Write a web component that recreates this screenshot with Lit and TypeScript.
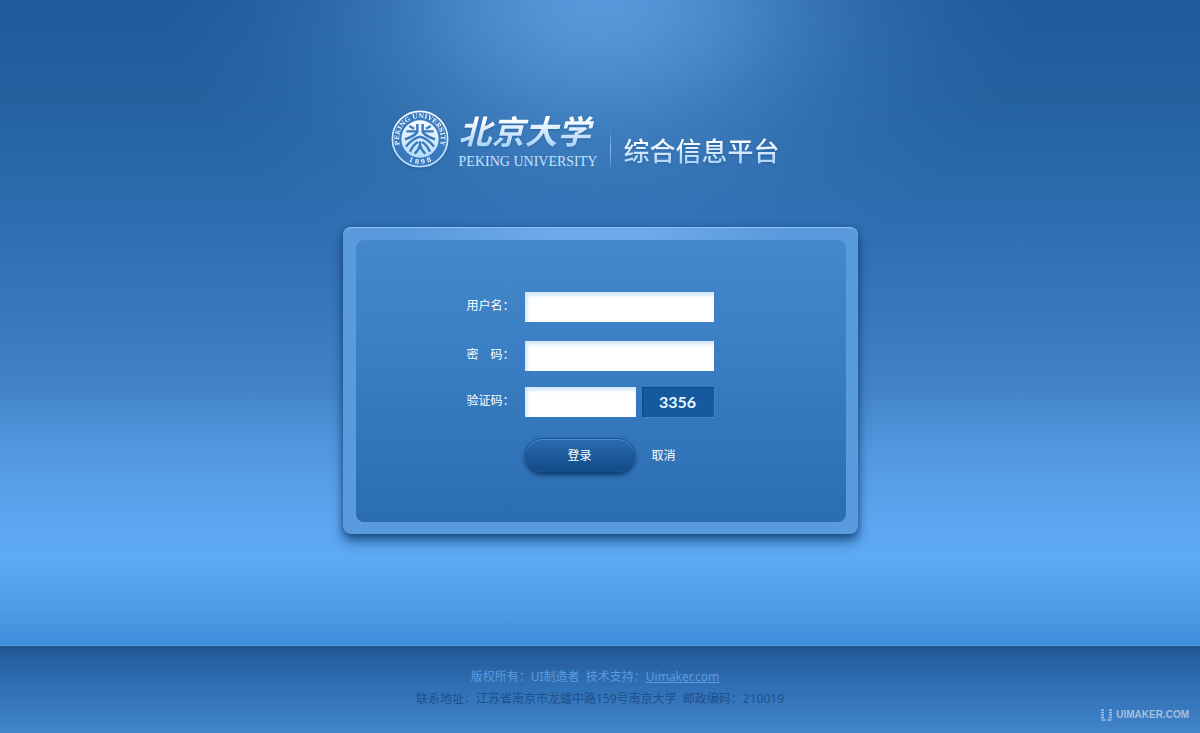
import { LitElement, html, css } from "lit";
import { customElement } from "lit/decorators.js";

@customElement("school-seal")
class SchoolSeal extends LitElement {
  static styles = css`
    :host {
      display: block;
    }
    .seal {
      display: block;
      width: 58px;
      height: 58px;
      filter: drop-shadow(0 1px 1px rgba(20, 70, 130, 0.5));
    }
    .ring-text {
      font: bold 19px "DejaVu Serif", serif;
      fill: #e6f5ff;
    }
  `;

  render() {
    return html`
      <svg class="seal" viewBox="0 0 174 174" role="img" aria-label="Peking University 1898">
        <defs>
          <linearGradient id="face" x1="0" y1="0" x2="0" y2="1">
            <stop offset="0" stop-color="#f6fcff" />
            <stop offset="1" stop-color="#b4dafb" />
          </linearGradient>
          <path id="upper" d="M32.440 118.500 A63 63 0 1 1 141.560 118.500" />
          <path id="lower" d="M38 143.300 A74.500 74.500 0 0 0 136 143.300" />
        </defs>
        <circle cx="87" cy="87" r="83" fill="#3a79be" stroke="url(#face)" stroke-width="5" />
        <circle cx="87" cy="87" r="56" fill="url(#face)" />
        <text class="ring-text">
          <textPath href="#upper" startOffset="50%" text-anchor="middle">PEKING UNIVERSITY</textPath>
        </text>
        <text class="ring-text">
          <textPath href="#lower" startOffset="50%" text-anchor="middle">1 8 9 8</textPath>
        </text>
        <g fill="none" stroke="#3678bb" stroke-width="7">
          <path d="M79 42 V66 Q71 78 42 88" />
          <path d="M95 42 V66 Q103 78 132 88" />
          <path d="M46 64 H79 M95 64 H128" />
          <path d="M55 48 L69 56 M119 48 L105 56" />
          <path d="M87 80 Q62 87 45 110" />
          <path d="M87 80 Q112 87 129 110" />
          <path d="M81 96 Q66 105 57 125" />
          <path d="M93 96 Q108 105 117 125" />
          <path d="M87 94 V108" />
          <path d="M87 105 Q83 121 71 131" />
          <path d="M87 105 Q91 121 103 131" />
        </g>
      </svg>
    `;
  }
}

@customElement("login-panel")
class LoginPanel extends LitElement {
  static styles = css`
    :host {
      display: block;
      width: 100%;
      max-width: 515px;
      font: 12px/26px "Noto Sans CJK SC", sans-serif;
      color: #fff;
    }
    .frame {
      padding: 12px 12px 12px 13px;
      border-radius: 8px;
      background: linear-gradient(90deg, #5a9bdd 0%, #5a9bdd 14%, #6eaae9 42%, #6eaae9 58%, #5a9bdd 84%) top / 100% 13px no-repeat, #5a9bdd;
      border-top: 1px solid #8dc0f4;
      box-shadow: 0 7px 12px rgba(14, 58, 112, 0.75), 0 1px 5px rgba(14, 58, 112, 0.5);
    }
    .form {
      display: flex;
      flex-direction: column;
      gap: 16px;
      min-height: 282px;
      box-sizing: border-box;
      padding: 52px 24px 48px 111px;
      border-radius: 8px;
      background: linear-gradient(#4588cc, #3a7ec3 40%, #2b6db1);
    }
    .credentials {
      display: flex;
      flex-direction: column;
      gap: 19px;
    }
    .row {
      display: flex;
    }
    .label {
      flex: 0 0 58px;
    }
    .field {
      box-sizing: border-box;
      width: 189px;
      height: 30px;
      margin: 0;
      padding: 0 8px;
      border: 0;
      border-radius: 0;
      background: #fff;
      box-shadow: inset 2px 3px 4px #cbe3fa;
      font: 12px "Noto Sans CJK SC", sans-serif;
      color: #1f4f82;
      outline: none;
    }
    .field:focus {
      box-shadow: inset 2px 3px 4px #8fc0f0;
    }
    .short {
      width: 111px;
      margin-right: 6px;
    }
    .code {
      width: 72px;
      height: 30px;
      text-align: center;
      font: bold 16px/30px Lato, sans-serif;
      color: #e4f7ff;
      background: #155a9f;
      box-shadow: inset 1px 1px 1px #0f4a88, 1px 1px 0 #4485c9;
    }
    .actions {
      display: flex;
      align-items: center;
      gap: 17px;
      padding: 5px 0 0 58px;
    }
    .submit {
      width: 110px;
      height: 34px;
      padding: 0;
      border: 1px solid #16528f;
      border-radius: 17px;
      background: linear-gradient(#2b6cb0, #124b87);
      box-shadow: inset 0 1px 0 #4c8cd0, 0 3px 4px rgba(8, 45, 92, 0.8);
      font: inherit;
      color: #fff;
      cursor: pointer;
    }
    .cancel {
      padding: 0;
      border: 0;
      background: none;
      font: inherit;
      color: #fff;
      cursor: pointer;
    }
  `;

  render() {
    return html`
      <div class="frame">
        <form class="form" @submit=${(e: Event) => e.preventDefault()}>
          <div class="credentials">
            <div class="row">
              <label class="label" for="user">用户名：</label>
              <input class="field" id="user" type="text" autocomplete="username" />
            </div>
            <div class="row">
              <label class="label" for="pass">密　码：</label>
              <input class="field" id="pass" type="password" autocomplete="current-password" />
            </div>
          </div>
          <div class="row">
            <label class="label" for="check">验证码：</label>
            <input class="field short" id="check" type="text" autocomplete="off" />
            <output class="code" for="check">3356</output>
          </div>
          <div class="actions">
            <button class="submit" type="submit">登录</button>
            <button class="cancel" type="reset">取消</button>
          </div>
        </form>
      </div>
    `;
  }
}

@customElement("app-root")
class AppRoot extends LitElement {
  static styles = css`
    :host {
      display: flex;
      flex-direction: column;
      min-height: 100vh;
      font-family: "Noto Sans CJK SC", sans-serif;
    }
    .main {
      flex: 1;
      display: flex;
      flex-direction: column;
      align-items: center;
      gap: 56px;
      padding: 106px 16px 60px;
      background:
        radial-gradient(ellipse 430px 290px at 50% 0, rgba(96, 160, 226, 0.9) 0%, rgba(96, 160, 226, 0.8) 15%, rgba(96, 160, 226, 0.6) 32%, rgba(96, 160, 226, 0.38) 48%, rgba(96, 160, 226, 0.2) 64%, rgba(96, 160, 226, 0.07) 82%, rgba(96, 160, 226, 0) 100%),
        linear-gradient(#1e5b9b 0%, #23619f 15%, #2d6cae 32%, #3777bb 48%, #4283c8 60%, #5298df 70%, #5ca6ef 80%, #5eaaf4 87%, #4f9ce7 94%, #3f8edb 100%);
    }
    .brand {
      display: flex;
      align-items: flex-start;
      padding-right: 30px;
    }
    .seal {
      margin-top: 4px;
    }
    .name {
      margin-left: 10px;
    }
    .school {
      margin: 0;
      font: italic 700 33px/48px "Noto Sans CJK SC", sans-serif;
    }
    .latin {
      margin: 0;
      font: 14px/15px "Liberation Serif", serif;
      color: #c2e2fd;
    }
    .divider {
      width: 1px;
      height: 42px;
      margin: 23px 12px 0 13px;
      background: linear-gradient(rgba(150, 200, 250, 0), #8fc2f4 50%, rgba(150, 200, 250, 0));
    }
    .title {
      margin: 25px 0 0;
      font: 500 26px/38px "Noto Sans CJK SC", sans-serif;
    }
    .shine {
      color: transparent;
      background: linear-gradient(#fff 25%, #a9d3fa 85%);
      -webkit-background-clip: text;
      background-clip: text;
      filter: drop-shadow(0 1px 1px rgba(20, 70, 130, 0.4));
    }
    .footer {
      position: relative;
      box-sizing: border-box;
      padding: 20px 16px 23px;
      border-top: 1px solid #4a9be0;
      text-align: center;
      font: 12px/22px "Noto Sans", "Noto Sans CJK SC", sans-serif;
      background: linear-gradient(#1f5590, #255f9e 12%, #2f6fb4 45%, #4285ca);
    }
    .line {
      margin: 0;
      white-space: pre-wrap;
      color: #1d508a;
    }
    .copyright {
      padding-right: 10px;
      color: #5c9bdf;
    }
    .link {
      color: inherit;
    }
    .mark {
      position: absolute;
      right: 11px;
      bottom: 11px;
      display: flex;
      align-items: center;
      gap: 4px;
      font: bold 10px/14px "Liberation Sans", sans-serif;
      color: #a5bfdc;
      text-decoration: none;
    }
    .glyph {
      display: block;
      width: 12px;
      height: 12px;
    }
  `;

  render() {
    return html`
      <main class="main">
        <header class="brand">
          <school-seal class="seal"></school-seal>
          <div class="name">
            <p class="school shine">北京大学</p>
            <p class="latin">PEKING UNIVERSITY</p>
          </div>
          <div class="divider"></div>
          <h1 class="title shine">综合信息平台</h1>
        </header>
        <login-panel></login-panel>
      </main>
      <footer class="footer">
        <p class="line copyright">版权所有：UI制造者  技术支持：<a class="link" href="#">Uimaker.com</a></p>
        <p class="line">联系地址：江苏省南京市龙蟠中路159号南京大学  邮政编码：210019</p>
        <a class="mark" href="#">
          <svg class="glyph" viewBox="0 0 12 12" aria-hidden="true">
            <path
              d="M1 1H4M1 3.500H4M1 6H4M1 8.500H4M1.500 11H5.500M9 1H12M9 3.500H12M9 6H12M9 8.500H12M7.500 11H11.500"
              stroke="#a5bfdc"
              stroke-width="1.600"
            />
          </svg>
          UIMAKER.COM
        </a>
      </footer>
    `;
  }
}
